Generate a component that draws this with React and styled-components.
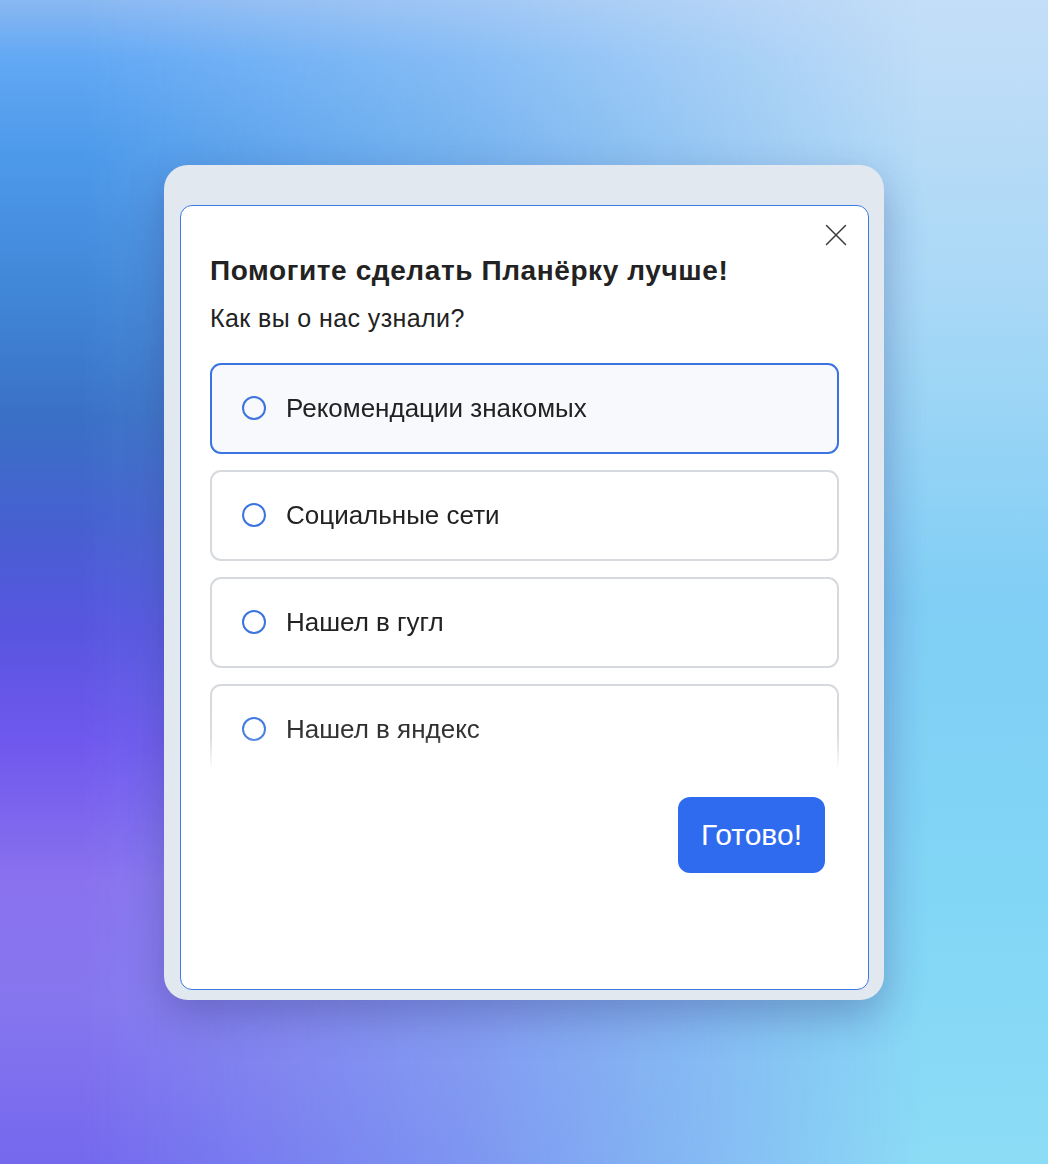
import React, { useState } from "react";
import styled, { createGlobalStyle } from "styled-components";

const options = [
  "Рекомендации знакомых",
  "Социальные сети",
  "Нашел в гугл",
  "Нашел в яндекс",
];

const GlobalStyle = createGlobalStyle`
  html, body {
    margin: 0;
    padding: 0;
  }
  body {
    font-family: "Liberation Sans", Arial, sans-serif;
    color: #222;
  }
`;

const App = () => {
  const [selected, setSelected] = useState(null);
  const hovered = 0;

  return (
    <>
      <GlobalStyle />
      <Page>
        <Frame>
          <Card>
            <CloseButton aria-label="Закрыть">
              <svg width="22" height="22" viewBox="0 0 22 22" fill="none">
                <path
                  d="M1.5 1.5L20.5 20.5M20.5 1.5L1.5 20.5"
                  stroke="#3a3a3a"
                  strokeWidth="1.5"
                  strokeLinecap="round"
                />
              </svg>
            </CloseButton>
            <Title>Помогите сделать Планёрку лучше!</Title>
            <Question>Как вы о нас узнали?</Question>
            <OptionList>
              {options.map((label, index) => (
                <Option
                  key={label}
                  $active={index === hovered}
                  onClick={() => setSelected(index)}
                >
                  <Radio $checked={selected === index} />
                  <OptionText>{label}</OptionText>
                </Option>
              ))}
            </OptionList>
            <Footer>
              <DoneButton>Готово!</DoneButton>
            </Footer>
          </Card>
        </Frame>
      </Page>
    </>
  );
};

export default App;

/* ---------------- Styled Components ---------------- */
const Page = styled.div`
  position: relative;
  width: 1048px;
  height: 1164px;
  display: flex;
  align-items: center;
  justify-content: center;
  overflow: hidden;
  background: linear-gradient(
    to bottom,
    #c4def8 0%,
    #a8d8f6 26%,
    #80cef5 52%,
    #82d6f5 77%,
    #8cdcf6 100%
  );

  &::before {
    content: "";
    position: absolute;
    inset: 0;
    background: linear-gradient(
      to bottom,
      #8ab8f2 0%,
      #62a8f4 5%,
      #4e9aea 13%,
      #4085d6 26%,
      #3a70c6 36%,
      #4660d0 45%,
      #5855e0 54%,
      #7058ee 64%,
      #8a72ee 76%,
      #8676ee 86%,
      #7468ee 100%
    );
    -webkit-mask-image: linear-gradient(to right, #000 8%, rgba(0, 0, 0, 0.6) 45%, transparent 88%);
    mask-image: linear-gradient(to right, #000 8%, rgba(0, 0, 0, 0.6) 45%, transparent 88%);
  }
`;

const Frame = styled.div`
  position: relative;
  z-index: 1;
  width: 720px;
  height: 835px;
  box-sizing: border-box;
  padding: 40px 15px 10px 16px;
  background: #e2e8f0;
  border-radius: 24px;
  box-shadow: 0 16px 40px rgba(40, 40, 110, 0.3);
  display: flex;
`;

const Card = styled.div`
  position: relative;
  flex: 1;
  display: flex;
  flex-direction: column;
  box-sizing: border-box;
  padding: 48px 29px 0;
  background: #fff;
  border: 1.5px solid #3b7be3;
  border-radius: 12px;
`;

const CloseButton = styled.button`
  position: absolute;
  top: 18px;
  right: 21px;
  padding: 0;
  border: none;
  background: none;
  cursor: pointer;
  display: flex;
`;

const Title = styled.h2`
  margin: 0;
  font-size: 28px;
  line-height: 34px;
  letter-spacing: 0.6px;
  font-weight: 700;
  color: #222;
`;

const Question = styled.p`
  margin: 15px 0 0;
  font-size: 25px;
  line-height: 30px;
  letter-spacing: 0.4px;
  color: #222;
`;

const OptionList = styled.div`
  margin-top: 30px;
  height: 407px;
  overflow: hidden;
  display: flex;
  flex-direction: column;
  gap: 16px;
  -webkit-mask-image: linear-gradient(to bottom, #000 85%, rgba(0, 0, 0, 0.9) 92%, transparent 100%);
  mask-image: linear-gradient(to bottom, #000 85%, rgba(0, 0, 0, 0.9) 92%, transparent 100%);
`;

const Option = styled.div`
  flex-shrink: 0;
  height: 91px;
  box-sizing: border-box;
  display: flex;
  align-items: center;
  gap: 20px;
  padding: 0 30px;
  border: 2px solid ${({ $active }) => ($active ? "#3b74e0" : "#d6d9de")};
  border-radius: 11px;
  background: ${({ $active }) => ($active ? "#f7f9fc" : "#fff")};
  cursor: pointer;
`;

const Radio = styled.span`
  width: 24px;
  height: 24px;
  box-sizing: border-box;
  border-radius: 50%;
  border: 2px solid #3b74e0;
  background: ${({ $checked }) => ($checked ? "radial-gradient(circle, #3b74e0 0 5px, #fff 6px)" : "transparent")};
  flex-shrink: 0;
`;

const OptionText = styled.span`
  font-size: 26px;
  color: #222;
`;

const Footer = styled.div`
  display: flex;
  justify-content: flex-end;
  padding-right: 14px;
  margin-top: 27px;
`;

const DoneButton = styled.button`
  height: 76px;
  padding: 0 23px;
  border: none;
  border-radius: 12px;
  background: #2f6bef;
  color: #fff;
  font-family: "Liberation Sans", Arial, sans-serif;
  font-size: 30px;
  cursor: pointer;
`;
